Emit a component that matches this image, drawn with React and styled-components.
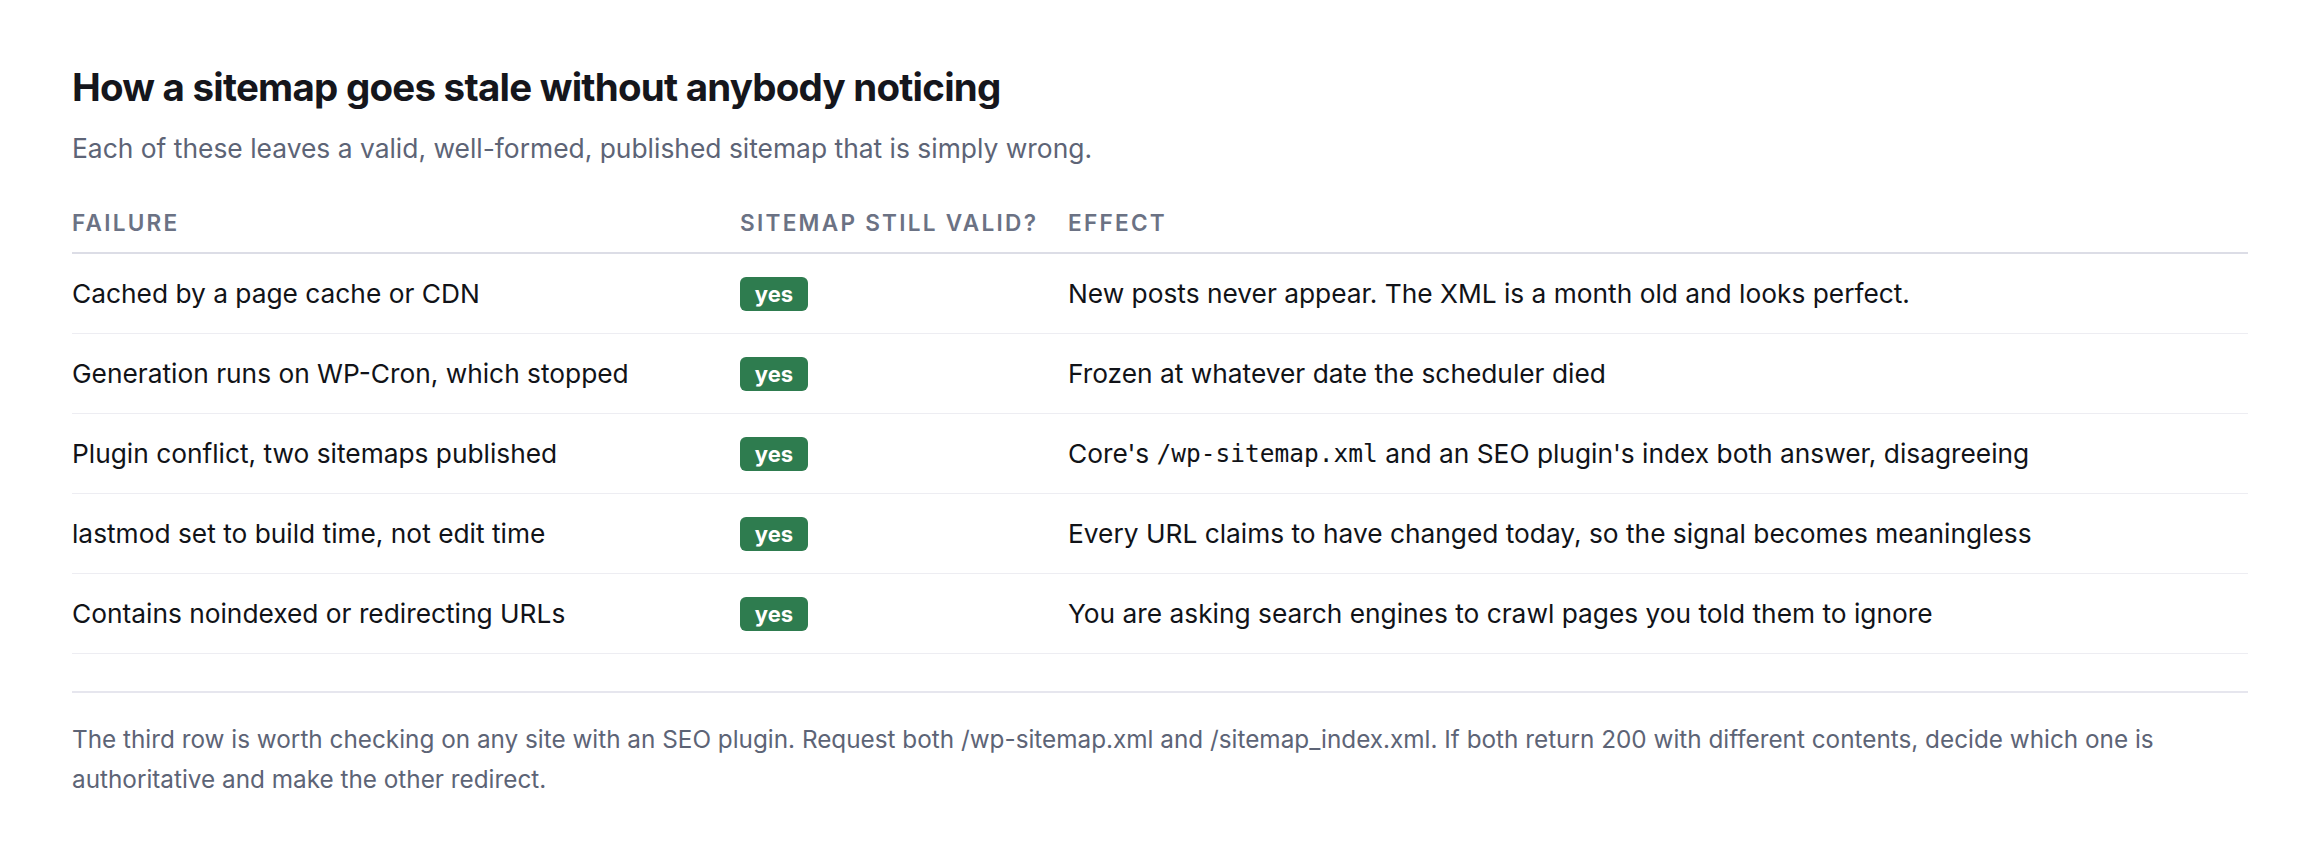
import React from "react";
import styled, { createGlobalStyle } from "styled-components";

const Global = createGlobalStyle`
  html, body { margin: 0; padding: 0; background: #ffffff; }
  body { font-family: Inter, "Noto Sans", sans-serif; color: #15161b; }
`;

const Page = styled.main`
  padding: 64px 72px 40px;
`;

const Title = styled.h2`
  margin: 0;
  font-size: 38.5px;
  line-height: 46px;
  font-weight: 700;
  letter-spacing: -0.02em;
  color: #15161c;
`;

const Lead = styled.p`
  margin: 22px 0 0;
  font-size: 26.4px;
  line-height: 33px;
  color: #5d6476;
`;

const Table = styled.div`
  margin-top: 30px;
  display: grid;
  grid-template-columns: 668px 328px 1fr;
`;

const HeadCell = styled.div`
  padding: 15px 0 16px;
  font-size: 22.6px;
  line-height: 26px;
  font-weight: 600;
  letter-spacing: 0.1em;
  text-transform: uppercase;
  color: #6b7284;
  border-bottom: 2px solid #dcdde6;
  white-space: nowrap;
`;

const Cell = styled.div`
  box-sizing: border-box;
  height: 80px;
  font-size: 26.3px;
  line-height: 33px;
  color: #111318;
  border-bottom: 1px solid #ededf2;
  display: flex;
  align-items: center;
  white-space: pre;
`;

const Badge = styled.span`
  display: inline-flex;
  align-items: center;
  justify-content: center;
  box-sizing: border-box;
  height: 34px;
  min-width: 68px;
  padding: 0 14px;
  border-radius: 6px;
  background: #2e7c4f;
  color: #ffffff;
  font-size: 22px;
  font-weight: 700;
  line-height: 1;
`;

const Code = styled.code`
  font-family: "DejaVu Sans Mono", "Liberation Mono", monospace;
  font-size: 24.5px;
`;

const Note = styled.p`
  margin: 37px 0 0;
  padding-top: 26px;
  border-top: 2px solid #e6e6ee;
  font-size: 24.3px;
  line-height: 40px;
  color: #5d6476;
`;

const rows = [
  ["Cached by a page cache or CDN", "New posts never appear. The XML is a month old and looks perfect."],
  ["Generation runs on WP-Cron, which stopped", "Frozen at whatever date the scheduler died"],
  [
    "Plugin conflict, two sitemaps published",
    <>
      Core's <Code>/wp-sitemap.xml</Code> and an SEO plugin's index both answer, disagreeing
    </>,
  ],
  ["lastmod set to build time, not edit time", "Every URL claims to have changed today, so the signal becomes meaningless"],
  ["Contains noindexed or redirecting URLs", "You are asking search engines to crawl pages you told them to ignore"],
];

export default function App() {
  return (
    <Page>
      <Global />
      <Title>How a sitemap goes stale without anybody noticing</Title>
      <Lead>Each of these leaves a valid, well-formed, published sitemap that is simply wrong.</Lead>
      <Table>
        <HeadCell>Failure</HeadCell>
        <HeadCell>Sitemap still valid?</HeadCell>
        <HeadCell>Effect</HeadCell>
        {rows.map(([failure, effect], i) => (
          <React.Fragment key={i}>
            <Cell>{failure}</Cell>
            <Cell>
              <Badge>yes</Badge>
            </Cell>
            <Cell>{effect}</Cell>
          </React.Fragment>
        ))}
      </Table>
      <Note>
        The third row is worth checking on any site with an SEO plugin. Request both /wp-sitemap.xml and
        /sitemap_index.xml. If both return 200 with different contents, decide which one is authoritative and
        make the other redirect.
      </Note>
    </Page>
  );
}
